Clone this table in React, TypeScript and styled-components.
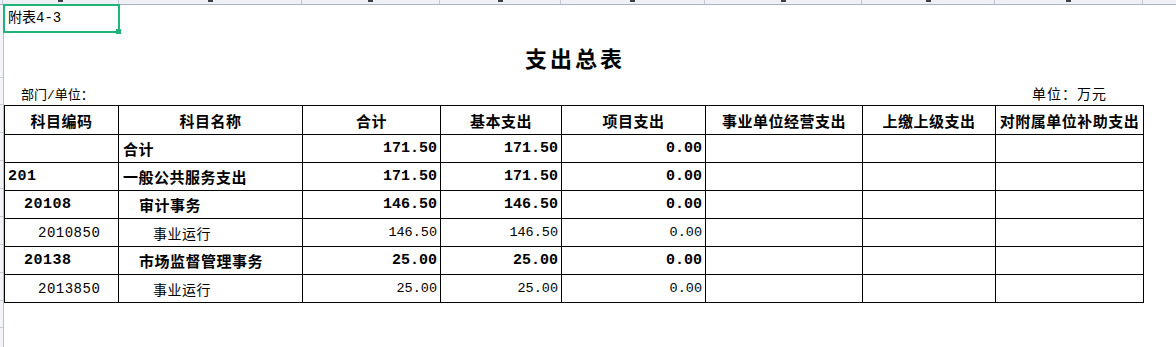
import React from "react";
import styled, { createGlobalStyle } from "styled-components";

const GlobalStyle = createGlobalStyle`
    html, body {
        margin: 0;
        padding: 0;
        background: #ffffff;
    }
    body {
        font-family: "Liberation Mono", "Noto Sans CJK SC", monospace;
        color: #000000;
    }
`;

const GREEN = "#1fb47a";

const Screen = styled.div`
    width: 1176px;
    height: 347px;
    overflow: hidden;
    display: flex;
    flex-direction: column;
    background: #ffffff;
`;

const ColumnBar = styled.div`
    height: 4px;
    flex: none;
    display: flex;
    overflow: hidden;
    background: #eef0f4;
    border-bottom: 1px solid #aab2c5;
`;

const Corner = styled.div`
    width: 3px;
    flex: none;
    border-right: 1px solid #c3c9d6;
    box-sizing: border-box;
`;

// only the feet of the column letters peek out of the cut-off header
const ColumnHead = styled.div<{ $w: number }>`
    width: ${(p) => p.$w}px;
    flex: none;
    box-sizing: border-box;
    border-right: 1px solid #c3c9d6;
    display: flex;
    justify-content: center;
    align-items: flex-start;
`;

const LetterFoot = styled.div`
    width: 5px;
    height: 2px;
    background: #3a3f4a;
`;

const Body = styled.div`
    flex: 1;
    display: flex;
    min-height: 0;
`;

const Gutter = styled.div`
    width: 4px;
    flex: none;
    box-sizing: border-box;
    background: #f3f4f7;
    border-right: 1px solid #b9bfcf;
    display: flex;
    flex-direction: column;
`;

const GutterRow = styled.div<{ $h: number; $tick?: boolean }>`
    height: ${(p) => p.$h}px;
    flex: none;
    box-sizing: border-box;
    border-bottom: 1px solid ${(p) => (p.$tick ? "#c6cbd8" : "transparent")};
`;

const Sheet = styled.div`
    flex: 1;
    display: flex;
    flex-direction: column;
`;

const FirstRow = styled.div`
    height: 28px;
    display: flex;
    align-items: stretch;
`;

const SelectedCell = styled.div`
    position: relative;
    width: 115px;
    height: 27px;
    padding-left: 4px;
    box-sizing: border-box;
    font-size: 14px;
    line-height: 27px;
    outline: 2px solid ${GREEN};
    outline-offset: -1px;

    &::after {
        content: "";
        position: absolute;
        right: -2px;
        bottom: -2px;
        width: 5px;
        height: 5px;
        background: ${GREEN};
    }
`;

const TitleRow = styled.div`
    width: 1139px;
    height: 45px;
    padding-top: 3px;
    box-sizing: border-box;
    display: flex;
    align-items: center;
    justify-content: center;
`;

const Title = styled.div`
    font-family: "Noto Sans CJK SC", sans-serif;
    font-weight: 700;
    font-size: 22px;
    letter-spacing: 3px;
    margin-right: -3px;
`;

const UnitRow = styled.div`
    width: 1139px;
    height: 27px;
    padding: 3px 36px 0 17px;
    box-sizing: border-box;
    display: flex;
    align-items: center;
    justify-content: space-between;
`;

const UnitText = styled.div<{ $size: number; $spacing?: number }>`
    font-size: ${(p) => p.$size}px;
    letter-spacing: ${(p) => p.$spacing ?? 0}px;
`;

const Table = styled.table`
    border-collapse: collapse;
    table-layout: fixed;
    width: 1139px;
`;

const HeadCell = styled.th`
    height: 28px;
    padding: 0;
    border: 1px solid #000000;
    font-family: "Noto Sans CJK SC", sans-serif;
    font-weight: 700;
    font-size: 15px;
    letter-spacing: 0.5px;
    text-align: center;
    white-space: nowrap;
    overflow: hidden;
`;

const Cell = styled.td<{ $bold?: boolean; $indent?: number; $num?: boolean }>`
    height: 28px;
    padding: 0 ${(p) => (p.$num ? 3 : 0)}px 0 ${(p) => p.$indent ?? 0}px;
    box-sizing: border-box;
    border: 1px solid #000000;
    font-weight: ${(p) => (p.$bold ? 700 : 400)};
    font-size: ${(p) =>
        p.$num ? (p.$bold ? 15 : 13.5) : p.$bold ? 15 : 14}px;
    letter-spacing: ${(p) => (p.$num ? 0 : 0.5)}px;
    text-align: ${(p) => (p.$num ? "right" : "left")};
    white-space: nowrap;
    overflow: hidden;
`;

const columns = [116, 183, 138, 121, 144, 157, 133, 148, 200];
const colWidths = [114, 184, 138, 121, 144, 157, 133, 148];
const gutterRows = [28, 45, 27, 28, 28, 28, 28, 28, 28, 28, 27, 28, 28];

const headers = [
    "科目编码",
    "科目名称",
    "合计",
    "基本支出",
    "项目支出",
    "事业单位经营支出",
    "上缴上级支出",
    "对附属单位补助支出",
];

type Row = {
    code: string;
    name: string;
    level: number;
    bold: boolean;
    total: string;
    basic: string;
    project: string;
};

const rows: Row[] = [
    { code: "", name: "合计", level: 0, bold: true, total: "171.50", basic: "171.50", project: "0.00" },
    { code: "201", name: "一般公共服务支出", level: 0, bold: true, total: "171.50", basic: "171.50", project: "0.00" },
    { code: "20108", name: "审计事务", level: 1, bold: true, total: "146.50", basic: "146.50", project: "0.00" },
    { code: "2010850", name: "事业运行", level: 2, bold: false, total: "146.50", basic: "146.50", project: "0.00" },
    { code: "20138", name: "市场监督管理事务", level: 1, bold: true, total: "25.00", basic: "25.00", project: "0.00" },
    { code: "2013850", name: "事业运行", level: 2, bold: false, total: "25.00", basic: "25.00", project: "0.00" },
];

const codeIndent = [3, 19, 33];
const nameIndent = [4, 20, 34];

const App: React.FC = () => {
    return (
        <>
            <GlobalStyle />
            <Screen>
                <ColumnBar>
                    <Corner />
                    {columns.map((w, i) => (
                        <ColumnHead key={i} $w={w}>
                            <LetterFoot />
                        </ColumnHead>
                    ))}
                </ColumnBar>
                <Body>
                    <Gutter>
                        {gutterRows.map((h, i) => (
                            <GutterRow key={i} $h={h} $tick={i > 0} />
                        ))}
                    </Gutter>
                    <Sheet>
                        <FirstRow>
                            <SelectedCell>附表4-3</SelectedCell>
                        </FirstRow>
                        <TitleRow>
                            <Title>支出总表</Title>
                        </TitleRow>
                        <UnitRow>
                            <UnitText $size={13}>部门/单位：</UnitText>
                            <UnitText $size={14} $spacing={1}>单位：万元</UnitText>
                        </UnitRow>
                        <Table>
                            <colgroup>
                                {colWidths.map((w, i) => (
                                    <col key={i} style={{ width: w }} />
                                ))}
                            </colgroup>
                            <thead>
                                <tr>
                                    {headers.map((h) => (
                                        <HeadCell key={h}>{h}</HeadCell>
                                    ))}
                                </tr>
                            </thead>
                            <tbody>
                                {rows.map((r, i) => (
                                    <tr key={i}>
                                        <Cell $bold={r.bold} $indent={codeIndent[r.level]}>{r.code}</Cell>
                                        <Cell $bold={r.bold} $indent={nameIndent[r.level]}>{r.name}</Cell>
                                        <Cell $bold={r.bold} $num>{r.total}</Cell>
                                        <Cell $bold={r.bold} $num>{r.basic}</Cell>
                                        <Cell $bold={r.bold} $num>{r.project}</Cell>
                                        <Cell />
                                        <Cell />
                                        <Cell />
                                    </tr>
                                ))}
                            </tbody>
                        </Table>
                    </Sheet>
                </Body>
            </Screen>
        </>
    );
};

export default App;
